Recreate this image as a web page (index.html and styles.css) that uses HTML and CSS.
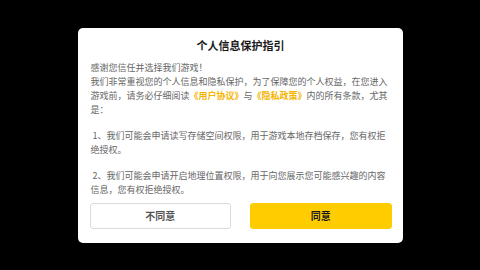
FILE: index.html
```html
<!DOCTYPE html>
<html lang="zh-CN">
<head>
    <meta charset="UTF-8">
    <meta name="viewport" content="width=device-width, initial-scale=1.0">
    <title>个人信息保护指引</title>
    <link rel="stylesheet" href="styles.css">
</head>
<body>

    <!-- 隐私弹窗 -->
    <div class="privacy-overlay">
        <div class="privacy-dialog">
            <div class="privacy-title">个人信息保护指引</div>

            <div class="privacy-body">
                <p>感谢您信任并选择我们游戏！<br>我们非常重视您的个人信息和隐私保护，为了保障您的个人权益，在您进入游戏前，请务必仔细阅读<span class="link">《用户协议》</span>与<span class="link">《隐私政策》</span>内的所有条款，尤其是：</p>
                <p>&nbsp;1、我们可能会申请读写存储空间权限，用于游戏本地存档保存，您有权拒绝授权。</p>
                <p>&nbsp;2、我们可能会申请开启地理位置权限，用于向您展示您可能感兴趣的内容信息，您有权拒绝授权。</p>
            </div>

            <div class="privacy-footer">
                <button type="button" class="btn btn-refuse">不同意</button>
                <button type="button" class="btn btn-agree">同意</button>
            </div>
        </div>
    </div>

</body>
</html>
```

FILE: styles.css
```css
/* 页面基础 */
html, body {
    margin: 0;
    height: 100%;
}

body {
    background-color: #000;
    font-family: "Noto Sans CJK SC", "Noto Sans", sans-serif;
    text-spacing-trim: space-all;
}

/* 遮罩：居中弹窗 */
.privacy-overlay {
    height: 100%;
    display: flex;
    justify-content: center;
    align-items: center;
}

/* 弹窗本体 */
.privacy-dialog {
    width: 325px;
    height: 215px;
    box-sizing: border-box;
    background-color: #fff;
    border-radius: 5px;
    padding: 9px 11px 14px 12px;
    display: flex;
    flex-direction: column;
}

.privacy-title {
    text-align: center;
    font-size: 11px;
    line-height: 16px;
    font-weight: bold;
    color: #1a1a1a;
}

/* 正文 */
.privacy-body {
    margin-top: 8px;
    padding: 0 1px;
    font-size: 9px;
    line-height: 14px;
    color: #666;
    flex: 1;
}

.privacy-body p {
    margin: 0 0 12px;
}

.privacy-body p:last-child {
    margin-bottom: 0;
}

.privacy-body .link {
    color: #f5b400;
    font-weight: bold;
}

/* 底部按钮 */
.privacy-footer {
    display: flex;
    gap: 19px;
}

.btn {
    flex: 1;
    height: 26px;
    border-radius: 3px;
    font-family: inherit;
    font-size: 10px;
    font-weight: bold;
    cursor: pointer;
}

.btn-refuse {
    background-color: #fff;
    border: 1px solid #dcdcdc;
    color: #555;
}

.btn-agree {
    background-color: #ffcc00;
    border: 1px solid #ffcc00;
    color: #1a1a1a;
}
```
